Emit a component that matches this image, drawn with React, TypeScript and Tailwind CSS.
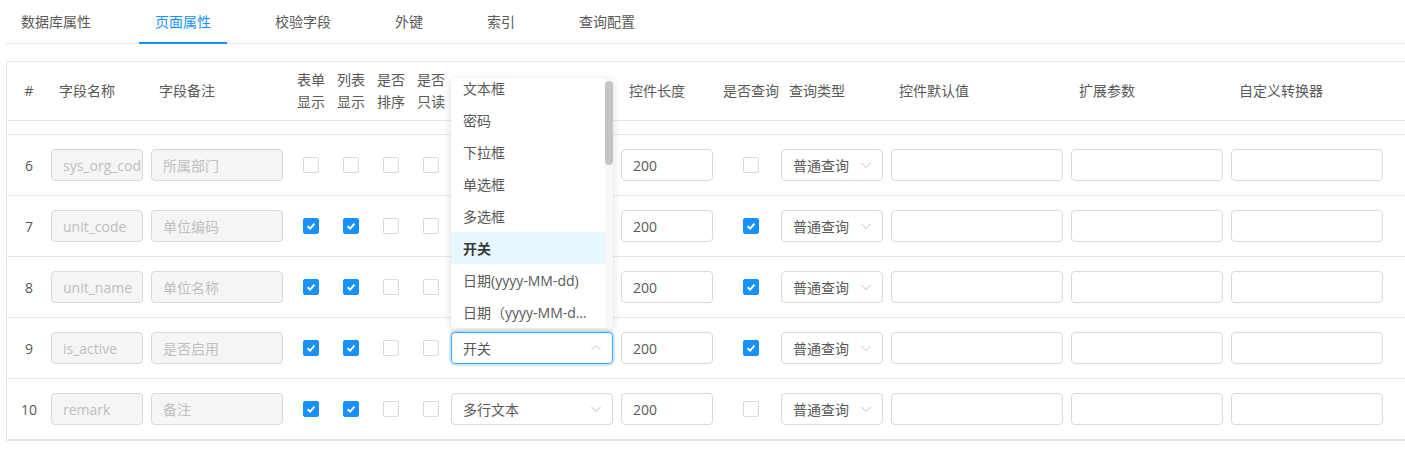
import { ReactNode } from 'react'

const TABS = ['数据库属性', '页面属性', '校验字段', '外键', '索引', '查询配置']

// rows 6-8 sit under the open dropdown, their select value is not visible
const ROWS = [
  { no: 6, name: 'sys_org_code', remark: '所属部门', form: false, list: false, sort: false, readonly: false, type: '', query: false },
  { no: 7, name: 'unit_code', remark: '单位编码', form: true, list: true, sort: false, readonly: false, type: '', query: true },
  { no: 8, name: 'unit_name', remark: '单位名称', form: true, list: true, sort: false, readonly: false, type: '', query: true },
  { no: 9, name: 'is_active', remark: '是否启用', form: true, list: true, sort: false, readonly: false, type: '开关', query: true, open: true },
  { no: 10, name: 'remark', remark: '备注', form: true, list: true, sort: false, readonly: false, type: '多行文本', query: false },
]

const OPTIONS = ['文本框', '密码', '下拉框', '单选框', '多选框', '开关', '日期(yyyy-MM-dd)', '日期（yyyy-MM-dd HH:mm:ss）']

function Checkbox({ checked }: { checked: boolean }) {
  return checked ? (
    <span className="w-4 h-4 rounded-[2px] bg-[#1890ff] border border-[#1890ff] flex items-center justify-center">
      <svg width="10" height="10" viewBox="0 0 10 10">
        <path d="M1.6 5.2 L4.1 7.6 L8.5 2.7" fill="none" stroke="#fff" strokeWidth="2" />
      </svg>
    </span>
  ) : (
    <span className="w-4 h-4 rounded-[2px] bg-white border border-[#d9d9d9]" />
  )
}

function Chevron({ up }: { up?: boolean }) {
  return (
    <svg width="12" height="12" viewBox="0 0 12 12" className="shrink-0">
      <path d={up ? 'M1.5 8 L6 3.5 L10.5 8' : 'M1.5 4 L6 8.5 L10.5 4'} fill="none" stroke="#bfbfbf" strokeWidth="1" />
    </svg>
  )
}

function Input({ w, value, disabled }: { w: string; value?: string; disabled?: boolean }) {
  return (
    <div
      className={`${w} h-8 rounded-[4px] border border-[#d9d9d9] px-[11px] flex items-center overflow-hidden whitespace-nowrap ${
        disabled ? 'bg-[#f5f5f5] text-[#bfbfbf]' : 'bg-white text-[#595959]'
      }`}
    >
      {value}
    </div>
  )
}

function Select({ w, value, open }: { w: string; value: string; open?: boolean }) {
  return (
    <div
      className={`${w} h-8 rounded-[4px] border bg-white pl-[11px] pr-[10px] flex items-center justify-between text-[#595959] ${
        open ? 'border-[#40a9ff] shadow-[0_0_0_2px_rgba(24,144,255,0.2)]' : 'border-[#d9d9d9]'
      }`}
    >
      <span className="whitespace-nowrap">{value}</span>
      <Chevron up={open} />
    </div>
  )
}

function Cell({ w, center, children }: { w: string; center?: boolean; children?: ReactNode }) {
  return <div className={`${w} shrink-0 flex items-center ${center ? 'justify-center' : ''}`}>{children}</div>
}

function HeadCell({ w, center, children }: { w: string; center?: boolean; children?: ReactNode }) {
  return (
    <div className={`${w} shrink-0 leading-[22px] ${center ? 'text-center' : 'pl-[8px]'}`}>{children}</div>
  )
}

export default function App() {
  return (
    <div className="w-[1405px] h-[451px] overflow-hidden bg-white text-[14px] text-[#595959] font-['Open_Sans','Noto_Sans_CJK_SC',sans-serif]">
      {/* Tabs */}
      <div className="ml-[6px] h-[44px] border-b border-[#e8e8e8] flex">
        {TABS.map((t, i) => (
          <div
            key={t}
            className={`relative h-full px-4 mr-8 flex items-center ${i === 0 ? '-ml-px' : ''} ${
              i === 1 ? 'text-[#1890ff]' : 'text-[#595959]'
            }`}
          >
            {t}
            {i === 1 && <span className="absolute left-0 right-0 -bottom-px h-[2px] bg-[#1890ff]" />}
          </div>
        ))}
      </div>

      {/* Table */}
      <div className="relative mt-[17px] ml-[6px] w-[1420px] border-l border-t border-b border-[#e8e8e8]">
        <div className="h-[59px] border-b border-[#e8e8e8] flex items-center">
          <HeadCell w="w-[44px]" center>#</HeadCell>
          <HeadCell w="w-[100px]">字段名称</HeadCell>
          <HeadCell w="w-[140px]">字段备注</HeadCell>
          <HeadCell w="w-[40px]" center>表单<br />显示</HeadCell>
          <HeadCell w="w-[40px]" center>列表<br />显示</HeadCell>
          <HeadCell w="w-[40px]" center>是否<br />排序</HeadCell>
          <HeadCell w="w-[40px]" center>是否<br />只读</HeadCell>
          <HeadCell w="w-[170px]">控件类型</HeadCell>
          <HeadCell w="w-[100px]">控件长度</HeadCell>
          <HeadCell w="w-[60px]" center>是否查询</HeadCell>
          <HeadCell w="w-[110px]">查询类型</HeadCell>
          <HeadCell w="w-[180px]">控件默认值</HeadCell>
          <HeadCell w="w-[160px]">扩展参数</HeadCell>
          <HeadCell w="w-[160px]">自定义转换器</HeadCell>
        </div>
        <div className="h-[14px] border-b border-[#e8e8e8]" />

        {ROWS.map((r) => (
          <div key={r.no} className="h-[61px] border-b border-[#e8e8e8] flex items-center">
            <Cell w="w-[44px]" center>{r.no}</Cell>
            <Cell w="w-[100px]"><Input w="w-[92px]" value={r.name} disabled /></Cell>
            <Cell w="w-[140px]"><Input w="w-[132px]" value={r.remark} disabled /></Cell>
            <Cell w="w-[40px]" center><Checkbox checked={r.form} /></Cell>
            <Cell w="w-[40px]" center><Checkbox checked={r.list} /></Cell>
            <Cell w="w-[40px]" center><Checkbox checked={r.sort} /></Cell>
            <Cell w="w-[40px]" center><Checkbox checked={r.readonly} /></Cell>
            <Cell w="w-[170px]"><Select w="w-[162px]" value={r.type} open={r.open} /></Cell>
            <Cell w="w-[100px]"><Input w="w-[92px]" value="200" /></Cell>
            <Cell w="w-[60px]" center><Checkbox checked={r.query} /></Cell>
            <Cell w="w-[110px]"><Select w="w-[102px]" value="普通查询" /></Cell>
            <Cell w="w-[180px]"><Input w="w-[172px]" /></Cell>
            <Cell w="w-[160px]"><Input w="w-[152px]" /></Cell>
            <Cell w="w-[160px]"><Input w="w-[152px]" /></Cell>
          </div>
        ))}

        {/* Open select dropdown */}
        <div className="absolute left-[444px] top-[16px] w-[162px] h-[250px] bg-white rounded-[4px] shadow-[0_2px_8px_rgba(0,0,0,0.15)] overflow-hidden flex">
          <div className="flex-1 min-w-0 -mt-[6px]">
            {OPTIONS.map((o) => (
              <div
                key={o}
                className={`h-8 px-3 flex items-center ${
                  o === '开关' ? 'bg-[#e6f7ff] font-semibold text-[#3a3a3a]' : 'text-[#595959]'
                }`}
              >
                <span className="truncate">{o}</span>
              </div>
            ))}
          </div>
          <div className="w-[8px] bg-[#f7f7f7] pt-[3px]">
            <div className="h-[84px] rounded-[4px] bg-[#c4c4c4]" />
          </div>
        </div>
      </div>
    </div>
  )
}
